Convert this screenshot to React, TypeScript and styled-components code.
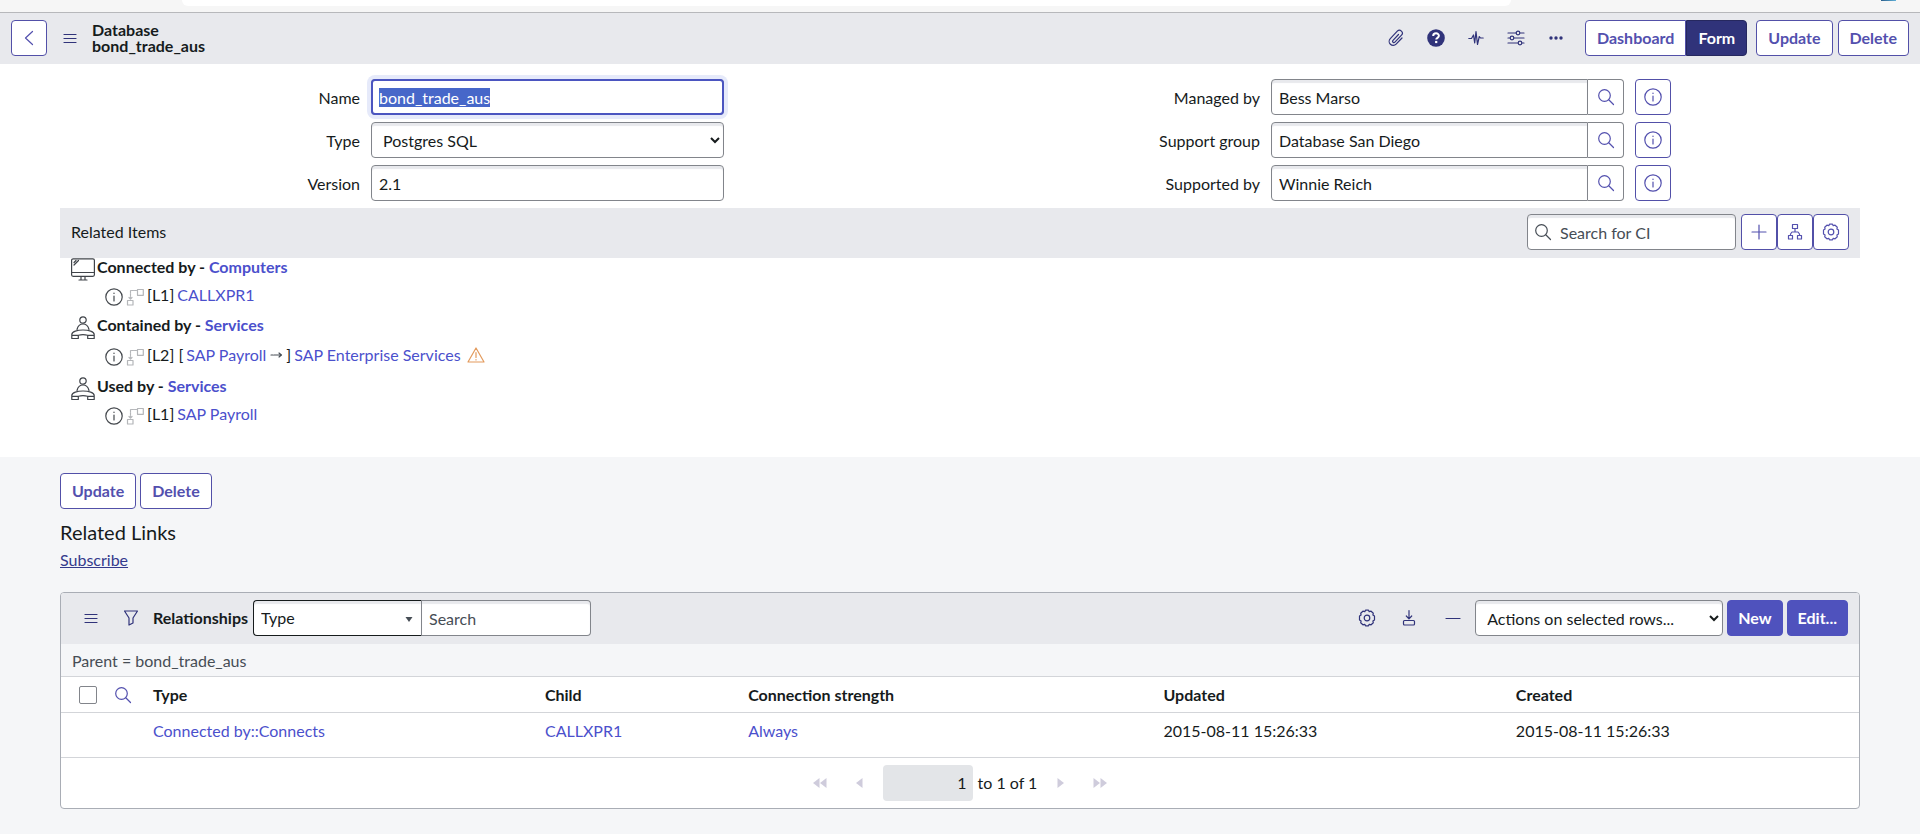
import React, { useEffect, useRef } from "react";
import styled, { createGlobalStyle, css } from "styled-components";

const colors = {
  text: "#161b1c",
  muted: "#464d55",
  page: "#f5f6f8",
  bar: "#e8e9ed",
  line: "#d3d5d9",
  frame: "#a9adb5",
  field: "#82858b",
  primary: "#4f52bd",
  buttonLine: "#5250a8",
  buttonText: "#5350ae",
  dark: "#30337a",
  link: "#4b50cc",
};

const GlobalStyle = createGlobalStyle`
  *, *::before, *::after { box-sizing: border-box; }
  body {
    margin: 0;
    background: ${colors.page};
    color: ${colors.text};
    font-family: Lato, "Noto Sans", sans-serif;
    font-size: 16px;
    line-height: 20px;
  }
  button, input, select { font: inherit; color: inherit; margin: 0; }
  button { cursor: pointer; }
  svg { display: block; flex: none; }
`;

/* ---------- icons ---------- */

const Stroke = styled.svg.attrs({ fill: "none", stroke: "currentColor", "aria-hidden": true })`
  stroke-width: 1.2;
  stroke-linecap: round;
  stroke-linejoin: round;
`;

const BackIcon = () => (
  <Stroke width="10" height="16" viewBox="0 0 10 16"><path d="M8.5 1.5 1.5 8l7 6.5" /></Stroke>
);
const MenuIcon = () => (
  <Stroke width="14" height="10" viewBox="0 0 14 10"><path d="M1 1.500h12M1 5.500h12M1 9.500h12" /></Stroke>
);
const ClipIcon = () => (
  <Stroke width="16" height="18" viewBox="0 0 16 18">
    <path d="M10.5 5.5 5 11.4a1.3 1.3 0 0 0 1.9 1.8l6.6-7a2.9 2.9 0 0 0-4.2-4L2.3 9.6a4 4 0 0 0 5.8 5.6l5.9-6.2" />
  </Stroke>
);
const HelpIcon = () => (
  <svg width="18" height="18" viewBox="0 0 18 18" aria-hidden="true">
    <circle cx="9" cy="9" r="8.8" fill="currentColor" />
    <path d="M6.2 7.1c0-3.700 5.700-3.500 5.700-.3 0 2-2.700 2-2.700 3.800" fill="none" stroke="#fff" strokeWidth="2" />
    <rect x="8.1" y="11.9" width="2.200" height="2.200" fill="#fff" />
  </svg>
);
const PulseIcon = () => (
  <Stroke width="16" height="16" viewBox="0 0 16 16">
    <path d="M.8 8.500h2.700L5.500 5l1.200 8L8 1.500l1.500 13 1.800-8 1.200 1.500h2.700" />
  </Stroke>
);
const SlidersIcon = () => (
  <Stroke width="18" height="16" viewBox="0 0 18 16">
    <path d="M1 3h8M13 3h4M1 8h2M7 8h10M1 13h10M15 13h2" />
    <circle cx="11" cy="3" r="1.800" /><circle cx="5" cy="8" r="1.800" /><circle cx="13" cy="13" r="1.800" />
  </Stroke>
);
const DotsIcon = () => (
  <svg width="16" height="4" viewBox="0 0 16 4" fill="currentColor" aria-hidden="true">
    <circle cx="3" cy="2" r="1.700" /><circle cx="8" cy="2" r="1.700" /><circle cx="13" cy="2" r="1.700" />
  </svg>
);
const SearchIcon = () => (
  <Stroke width="18" height="18" viewBox="0 0 18 18">
    <circle cx="7.500" cy="7.500" r="5.800" /><path d="m12 12 4.500 4.500" />
  </Stroke>
);
const InfoIcon = () => (
  <Stroke width="18" height="18" viewBox="0 0 18 18">
    <circle cx="9" cy="9" r="8.200" /><path d="M9 8v5M9 5v.5" />
  </Stroke>
);
const PlusIcon = () => (
  <Stroke width="16" height="16" viewBox="0 0 16 16"><path d="M8 1v14M1 8h14" /></Stroke>
);
const TreeIcon = () => (
  <Stroke width="16" height="18" viewBox="0 0 16 18">
    <path d="M5.500 1.500h5v4h-5zM1.500 12.500h4v3.500h-4zM10.500 12.500h4v3.500h-4zM8 5.500V9M3.500 12.500V11L5 9h6l1.500 2v1.500" />
  </Stroke>
);
const GearIcon = () => (
  <Stroke width="18" height="18" viewBox="0 0 18 18">
    <path d="M7.500 1.200h3l.7 1.500 1.900-.5 2.200 2-.4 1.900 1.600 1v3.800l-1.600 1 .4 1.900-2.200 2-1.900-.5-.7 1.500h-3l-.7-1.500-1.900.5-2.200-2 .4-1.900-1.600-1V7.100l1.600-1-.4-1.900 2.200-2 1.900.5z" />
    <circle cx="9" cy="9" r="2.800" />
  </Stroke>
);
const FunnelIcon = () => (
  <Stroke width="16" height="16" viewBox="0 0 16 16"><path d="M1.500 1h13L10 8v5l-4 2V8z" /></Stroke>
);
const DownloadIcon = () => (
  <Stroke width="14" height="18" viewBox="0 0 14 18">
    <path d="M7 1.500v8M4.300 7 7 9.800 9.700 7" /><rect x="1.500" y="11.500" width="11" height="4.500" rx="1" />
  </Stroke>
);
const MinusIcon = () => (
  <Stroke width="16" height="4" viewBox="0 0 16 4"><path d="M1 2.500h14" /></Stroke>
);
const MonitorIcon = () => (
  <Stroke width="24" height="24" viewBox="0 0 24 24">
    <rect x=".6" y=".8" width="22.800" height="17.500" rx="1.500" />
    <path d="M1 14.500h22M3 7l4.500-4.500M3 4.500l2-2M10 18.500v3M14 18.500v3M8 22h8" />
  </Stroke>
);
const ServiceIcon = () => (
  <Stroke width="24" height="24" viewBox="0 0 24 24">
    <circle cx="12" cy="4" r="3.200" />
    <path d="M6 13.500C7 9.500 9 8 12 8s5 1.500 6 5.500" />
    <path d="M.8 22.500v-4c0-6 22.400-6 22.400 0v4h-6.500v-3.200c-3-.9-6.400-.9-9.400 0v3.200zM1 19.300h6.300M16.700 19.300H23" />
  </Stroke>
);
const RelationIcon = () => (
  <Stroke width="18" height="18" viewBox="0 0 18 18">
    <rect x="11.500" y="1.500" width="5.800" height="5.800" /><rect x="1.500" y="12.500" width="5.500" height="4.500" />
    <path d="M10.500 2.500h-6V11" strokeDasharray="2 1" /><path d="m3 9.500 1.500 1.500L6 9.500" />
  </Stroke>
);
const ArrowIcon = () => (
  <Stroke width="13" height="8" viewBox="0 0 13 8"><path d="M1 4h2M4 4h7.500M9 2l2.500 2L9 6" /></Stroke>
);
const WarningIcon = () => (
  <Stroke width="18" height="16" viewBox="0 0 18 16">
    <path d="M9 1 17 15H1zM9 5.500v5M9 12.500v.5" />
  </Stroke>
);
const Triangles = ({ count, left }: { count: number; left?: boolean }) => (
  <svg width={count * 7} height="12" viewBox={`0 0 ${count * 7} 12`} fill="currentColor" aria-hidden="true">
    {Array.from({ length: count }, (_, i) => (
      <path key={i} d={left ? `M${i * 7} 6l6.500-5v10z` : `M${i * 7 + 7} 6l-6.500-5v10z`} />
    ))}
  </svg>
);

/* ---------- shared controls ---------- */

const Button = styled.button<{ $primary?: boolean }>`
  height: 36px;
  padding: 0 ${(p) => (p.$primary ? 10 : 11)}px;
  border: 1px solid ${(p) => (p.$primary ? colors.primary : colors.buttonLine)};
  border-radius: 4px;
  background: ${(p) => (p.$primary ? colors.primary : "#fff")};
  color: ${(p) => (p.$primary ? "#fff" : colors.buttonText)};
  font-weight: 700;
  white-space: nowrap;
`;

const SquareButton = styled.button`
  display: grid;
  place-items: center;
  flex: none;
  width: 36px;
  height: 36px;
  padding: 0;
  border: 1px solid ${colors.buttonLine};
  border-radius: 4px;
  background: #fff;
  color: ${colors.buttonText};
`;

const IconButton = styled.button<{ $width?: number }>`
  display: grid;
  place-items: center;
  flex: none;
  width: ${(p) => p.$width ?? 40}px;
  height: 36px;
  padding: 0;
  border: 0;
  background: none;
  color: ${colors.dark};
  &:disabled { color: #cfccdc; cursor: default; }
`;

const fieldStyle = css`
  width: 100%;
  min-width: 0;
  height: 36px;
  border: 1px solid ${colors.field};
  border-radius: 4px;
  background: #fff;
  box-shadow: inset 0 3px 1px ${colors.bar};
  color: ${colors.text};
`;

const TextInput = styled.input`
  ${fieldStyle}
  padding: 0 7px;
  &::placeholder { color: ${colors.muted}; opacity: 1; }
  &::selection { background: #4767c9; color: #fff; }
  &:focus {
    outline: 2px solid #4b55c0;
    outline-offset: -2px;
    box-shadow: 0 0 0 4px #e6eafa;
  }
`;

const Select = styled.select`
  ${fieldStyle}
  padding: 0 0 0 7px;
`;

/* ---------- browser edge and header ---------- */

const BrowserEdge = styled.div`
  display: flex;
  height: 13px;
  padding: 0 24px 0 182px;
  border-bottom: 1px solid #b7b8bb;
  background: #f6f6f6;
`;
const AddressBar = styled.div`
  flex: 1;
  height: 6px;
  margin-right: 370px;
  border-radius: 0 0 16px 16px;
  background: #fff;
`;
const EdgeMark = styled.div`
  width: 15px;
  height: 1px;
  background: linear-gradient(90deg, #2c5f8c, #5fb0d8);
`;

const Header = styled.header`
  display: flex;
  align-items: center;
  height: 51px;
  padding: 0 11px 1px;
  background: ${colors.bar};
`;
const Title = styled.h1`
  flex: 1;
  margin: 0;
  font-size: 16px;
  line-height: 16px;
  font-weight: 700;
`;
const TitleLine = styled.span`display: block;`;
const HeaderTools = styled.div`
  display: flex;
  margin-right: 9px;
`;
const ButtonRow = styled.div<{ $gap: number }>`
  display: flex;
  gap: ${(p) => p.$gap}px;
`;
const ViewSwitch = styled.div`
  display: flex;
  margin-right: 9px;
`;
const ViewButton = styled(Button)<{ $active?: boolean }>`
  border-radius: ${(p) => (p.$active ? "0 4px 4px 0" : "4px 0 0 4px")};
  ${(p) => p.$active && css`
    border-color: #26285f;
    background: ${colors.dark};
    color: #fff;
  `}
`;

/* ---------- form ---------- */

const FormArea = styled.section`
  padding: 15px 60px 22px;
  background: #fff;
`;
const FormColumns = styled.div`
  display: grid;
  grid-template-columns: 1fr 1fr;
`;
const FieldList = styled.div`
  display: grid;
  gap: 7px;
`;
const FieldRow = styled.div`
  display: grid;
  grid-template-columns: 300fr 353fr 225fr;
  column-gap: 11px;
  align-items: center;
`;
const FieldLabel = styled.label`
  padding-top: 2px;
  text-align: right;
`;
const Reference = styled.div`
  display: flex;
`;
const ReferenceInput = styled(TextInput)`border-radius: 4px 0 0 4px;`;
const LookupButton = styled(SquareButton)`
  border-color: ${colors.field};
  border-left: 0;
  border-radius: 0 4px 4px 0;
`;

const ReferenceField = ({ id, label, value }: { id: string; label: string; value: string }) => (
  <FieldRow>
    <FieldLabel htmlFor={id}>{label}</FieldLabel>
    <Reference>
      <ReferenceInput id={id} defaultValue={value} />
      <LookupButton type="button" aria-label={`Look up ${label}`}><SearchIcon /></LookupButton>
    </Reference>
    <SquareButton type="button" aria-label={`Preview ${label}`}><InfoIcon /></SquareButton>
  </FieldRow>
);

/* ---------- related items ---------- */

const ItemsBar = styled.div`
  display: flex;
  align-items: center;
  height: 50px;
  margin-top: 7px;
  padding: 0 11px 2px;
  background: ${colors.bar};
`;
const ItemsTitle = styled.h2`
  flex: 1;
  margin: 0;
  font-size: 16px;
  line-height: 20px;
  font-weight: 400;
`;
const CiSearch = styled.label`
  position: relative;
  width: 209px;
  margin-right: 5px;
`;
const CiSearchIcon = styled.span`
  position: absolute;
  left: 7px;
  top: 9px;
  color: ${colors.muted};
`;
const CiSearchInput = styled(TextInput)`padding-left: 32px;`;

const Group = styled.div`
  padding: 0 0 4px 11px;
`;
const GroupHead = styled.h3`
  display: flex;
  gap: 2px;
  height: 24px;
  margin: 0;
  font-size: 16px;
  line-height: 18px;
  font-weight: 700;
  color: ${colors.text};
  svg { color: #40444a; }
`;
const Item = styled.div<{ $tall?: boolean }>`
  display: flex;
  align-items: center;
  height: ${(p) => (p.$tall ? 33 : 30)}px;
  padding-left: 34px;
`;
const ItemIcons = styled.span`
  display: flex;
  gap: 3px;
  margin-right: 3px;
  color: #45494e;
  svg + svg { color: #b4b6b9; }
`;
const ItemText = styled.span`
  display: inline-flex;
  align-items: center;
  gap: 3px;
  padding-bottom: 4px;
`;
const Hop = styled.span`
  display: inline-flex;
  align-items: center;
  gap: 4px;
  svg { color: ${colors.muted}; }
`;
const Warning = styled.span`
  margin: 0 0 4px 6px;
  color: #e39a5c;
`;
const Link = styled.a`
  color: ${colors.link};
  text-decoration: none;
`;

/* ---------- lower part ---------- */

const Lower = styled.section`
  padding: 16px 60px 26px;
`;
const LinksTitle = styled.h2`
  margin: 11px 0 6px;
  font-size: 20px;
  line-height: 24px;
  font-weight: 400;
`;
const UnderlinedLink = styled.a`
  display: inline-block;
  color: #343a8c;
  text-decoration: underline;
`;
const Panel = styled.section`
  margin-top: 22px;
  border: 1px solid ${colors.frame};
  border-radius: 4px;
  background: #fff;
  overflow: hidden;
`;
const PanelBar = styled.div`
  display: flex;
  align-items: center;
  height: 51px;
  padding: 0 11px 1px 10px;
  background: ${colors.bar};
`;
const PanelTitle = styled.h2`
  flex: none;
  width: 102px;
  margin: 0;
  padding-left: 2px;
  font-size: 16px;
  line-height: 20px;
  font-weight: 700;
`;
const ColumnPicker = styled.div`
  position: relative;
  width: 169px;
`;
const ColumnSelect = styled(Select)`
  appearance: none;
  border-color: ${colors.text};
  border-right-color: ${colors.field};
  border-radius: 4px 0 0 4px;
`;
const PickerArrow = styled.svg`
  position: absolute;
  right: 9px;
  top: 17px;
  pointer-events: none;
  color: ${colors.muted};
`;
const PanelSearch = styled(TextInput)`
  width: 169px;
  border-left: 0;
  border-radius: 0 4px 4px 0;
`;
const Spacer = styled.div`flex: 1;`;
const ActionSelect = styled(Select)`
  width: 248px;
  margin-right: 4px;
`;
const Breadcrumb = styled.div`
  height: 32px;
  padding: 7px 11px 0;
  background: ${colors.page};
  color: ${colors.muted};
`;
const Table = styled.table`
  width: 100%;
  border-collapse: collapse;
  table-layout: fixed;
`;
const HeadCell = styled.th`
  height: 36px;
  padding: 0;
  border-top: 1px solid ${colors.line};
  text-align: left;
  font-weight: 700;
`;
const Cell = styled.td`
  height: 44px;
  padding: 8px 0 0;
  border-top: 1px solid ${colors.line};
  vertical-align: top;
`;
const Col = styled.col<{ $width: string }>`width: ${(p) => p.$width};`;
const CheckBox = styled.input`
  appearance: none;
  display: block;
  width: 18px;
  height: 18px;
  margin-left: 18px;
  border: 1px solid ${colors.field};
  border-radius: 2px;
  background: #fff;
`;
const TableSearch = styled(IconButton)`
  height: 30px;
  color: ${colors.buttonText};
`;
const Pager = styled.div`
  display: flex;
  align-items: center;
  justify-content: center;
  height: 51px;
  border-top: 1px solid ${colors.line};
`;
const PageInput = styled.input`
  width: 90px;
  height: 36px;
  margin: 0 5px 0 3px;
  padding: 0 6px;
  border: 0;
  border-radius: 4px;
  background: #e3e5e8;
  color: ${colors.text};
  text-align: right;
`;
const PageText = styled.span`margin-right: 3px;`;

const columns = ["Type", "Child", "Connection strength", "Updated", "Created"];

export default function App() {
  const nameRef = useRef<HTMLInputElement>(null);
  useEffect(() => {
    nameRef.current?.focus();
    nameRef.current?.select();
  }, []);

  return (
    <>
      <GlobalStyle />
      <BrowserEdge>
        <AddressBar />
        <EdgeMark />
      </BrowserEdge>
      <Header>
        <SquareButton type="button" aria-label="Back"><BackIcon /></SquareButton>
        <IconButton type="button" $width={45} aria-label="Form menu"><MenuIcon /></IconButton>
        <Title>
          <TitleLine>Database</TitleLine>
          <TitleLine>bond_trade_aus</TitleLine>
        </Title>
        <HeaderTools>
          <IconButton type="button" aria-label="Attachments"><ClipIcon /></IconButton>
          <IconButton type="button" aria-label="Help"><HelpIcon /></IconButton>
          <IconButton type="button" aria-label="Activity"><PulseIcon /></IconButton>
          <IconButton type="button" aria-label="Personalize form"><SlidersIcon /></IconButton>
          <IconButton type="button" aria-label="More options"><DotsIcon /></IconButton>
        </HeaderTools>
        <ViewSwitch>
          <ViewButton type="button">Dashboard</ViewButton>
          <ViewButton type="button" $active>Form</ViewButton>
        </ViewSwitch>
        <ButtonRow $gap={5}>
          <Button type="button">Update</Button>
          <Button type="button">Delete</Button>
        </ButtonRow>
      </Header>

      <main>
        <FormArea>
          <FormColumns>
            <FieldList>
              <FieldRow>
                <FieldLabel htmlFor="name">Name</FieldLabel>
                <TextInput id="name" ref={nameRef} defaultValue="bond_trade_aus" />
              </FieldRow>
              <FieldRow>
                <FieldLabel htmlFor="type">Type</FieldLabel>
                <Select id="type"><option>Postgres SQL</option></Select>
              </FieldRow>
              <FieldRow>
                <FieldLabel htmlFor="version">Version</FieldLabel>
                <TextInput id="version" defaultValue="2.1" />
              </FieldRow>
            </FieldList>
            <FieldList>
              <ReferenceField id="managed" label="Managed by" value="Bess Marso" />
              <ReferenceField id="group" label="Support group" value="Database San Diego" />
              <ReferenceField id="supported" label="Supported by" value="Winnie Reich" />
            </FieldList>
          </FormColumns>

          <ItemsBar>
            <ItemsTitle>Related Items</ItemsTitle>
            <CiSearch>
              <CiSearchIcon><SearchIcon /></CiSearchIcon>
              <CiSearchInput placeholder="Search for CI" aria-label="Search for CI" />
            </CiSearch>
            <SquareButton type="button" aria-label="Add relationship"><PlusIcon /></SquareButton>
            <SquareButton type="button" aria-label="Dependency map"><TreeIcon /></SquareButton>
            <SquareButton type="button" aria-label="Settings"><GearIcon /></SquareButton>
          </ItemsBar>

          <Group>
            <GroupHead><MonitorIcon /><span>Connected by - <Link href="#computers">Computers</Link></span></GroupHead>
            <Item>
              <ItemIcons><InfoIcon /><RelationIcon /></ItemIcons>
              <ItemText>[L1] <Link href="#callxpr1">CALLXPR1</Link></ItemText>
            </Item>
          </Group>
          <Group>
            <GroupHead><ServiceIcon /><span>Contained by - <Link href="#services">Services</Link></span></GroupHead>
            <Item $tall>
              <ItemIcons><InfoIcon /><RelationIcon /></ItemIcons>
              <ItemText>
                <span>[L2] [</span>
                <Hop><Link href="#payroll">SAP Payroll</Link> <ArrowIcon /></Hop>
                <span>]</span>
                <Link href="#enterprise">SAP Enterprise Services</Link>
              </ItemText>
              <Warning><WarningIcon /></Warning>
            </Item>
          </Group>
          <Group>
            <GroupHead><ServiceIcon /><span>Used by - <Link href="#services">Services</Link></span></GroupHead>
            <Item>
              <ItemIcons><InfoIcon /><RelationIcon /></ItemIcons>
              <ItemText>[L1] <Link href="#payroll">SAP Payroll</Link></ItemText>
            </Item>
          </Group>
        </FormArea>

        <Lower>
          <ButtonRow $gap={4}>
            <Button type="button">Update</Button>
            <Button type="button">Delete</Button>
          </ButtonRow>
          <LinksTitle>Related Links</LinksTitle>
          <UnderlinedLink href="#subscribe">Subscribe</UnderlinedLink>

          <Panel>
            <PanelBar>
              <IconButton type="button" aria-label="List menu"><MenuIcon /></IconButton>
              <IconButton type="button" aria-label="Filter"><FunnelIcon /></IconButton>
              <PanelTitle>Relationships</PanelTitle>
              <ColumnPicker>
                <ColumnSelect aria-label="Search column"><option>Type</option></ColumnSelect>
                <PickerArrow width="8" height="5" viewBox="0 0 8 5" fill="currentColor" aria-hidden="true">
                  <path d="M.5 0h7L4 5z" />
                </PickerArrow>
              </ColumnPicker>
              <PanelSearch placeholder="Search" aria-label="Search" />
              <Spacer />
              <IconButton type="button" aria-label="List settings"><GearIcon /></IconButton>
              <IconButton type="button" $width={44} aria-label="Export"><DownloadIcon /></IconButton>
              <IconButton type="button" $width={44} aria-label="Collapse"><MinusIcon /></IconButton>
              <ActionSelect aria-label="Actions"><option>Actions on selected rows...</option></ActionSelect>
              <ButtonRow $gap={4}>
                <Button type="button" $primary>New</Button>
                <Button type="button" $primary>Edit...</Button>
              </ButtonRow>
            </PanelBar>
            <Breadcrumb>Parent = bond_trade_aus</Breadcrumb>
            <Table>
              <colgroup>
                <Col $width="42px" /><Col $width="50px" />
                <Col $width="21.8%" /><Col $width="11.3%" /><Col $width="23.1%" /><Col $width="19.6%" /><Col $width="auto" />
              </colgroup>
              <thead>
                <tr>
                  <HeadCell><CheckBox type="checkbox" aria-label="Select all rows" /></HeadCell>
                  <HeadCell><TableSearch type="button" aria-label="Search rows"><SearchIcon /></TableSearch></HeadCell>
                  {columns.map((c) => <HeadCell key={c} scope="col">{c}</HeadCell>)}
                </tr>
              </thead>
              <tbody>
                <tr>
                  <Cell /><Cell />
                  <Cell><Link href="#relation">Connected by::Connects</Link></Cell>
                  <Cell><Link href="#callxpr1">CALLXPR1</Link></Cell>
                  <Cell><Link href="#always">Always</Link></Cell>
                  <Cell>2015-08-11 15:26:33</Cell>
                  <Cell>2015-08-11 15:26:33</Cell>
                </tr>
              </tbody>
            </Table>
            <Pager>
              <IconButton type="button" disabled aria-label="First page"><Triangles count={2} left /></IconButton>
              <IconButton type="button" disabled aria-label="Previous page"><Triangles count={1} left /></IconButton>
              <PageInput readOnly value="1" aria-label="Row" />
              <PageText>to 1 of 1</PageText>
              <IconButton type="button" disabled aria-label="Next page"><Triangles count={1} /></IconButton>
              <IconButton type="button" disabled aria-label="Last page"><Triangles count={2} /></IconButton>
            </Pager>
          </Panel>
        </Lower>
      </main>
    </>
  );
}
